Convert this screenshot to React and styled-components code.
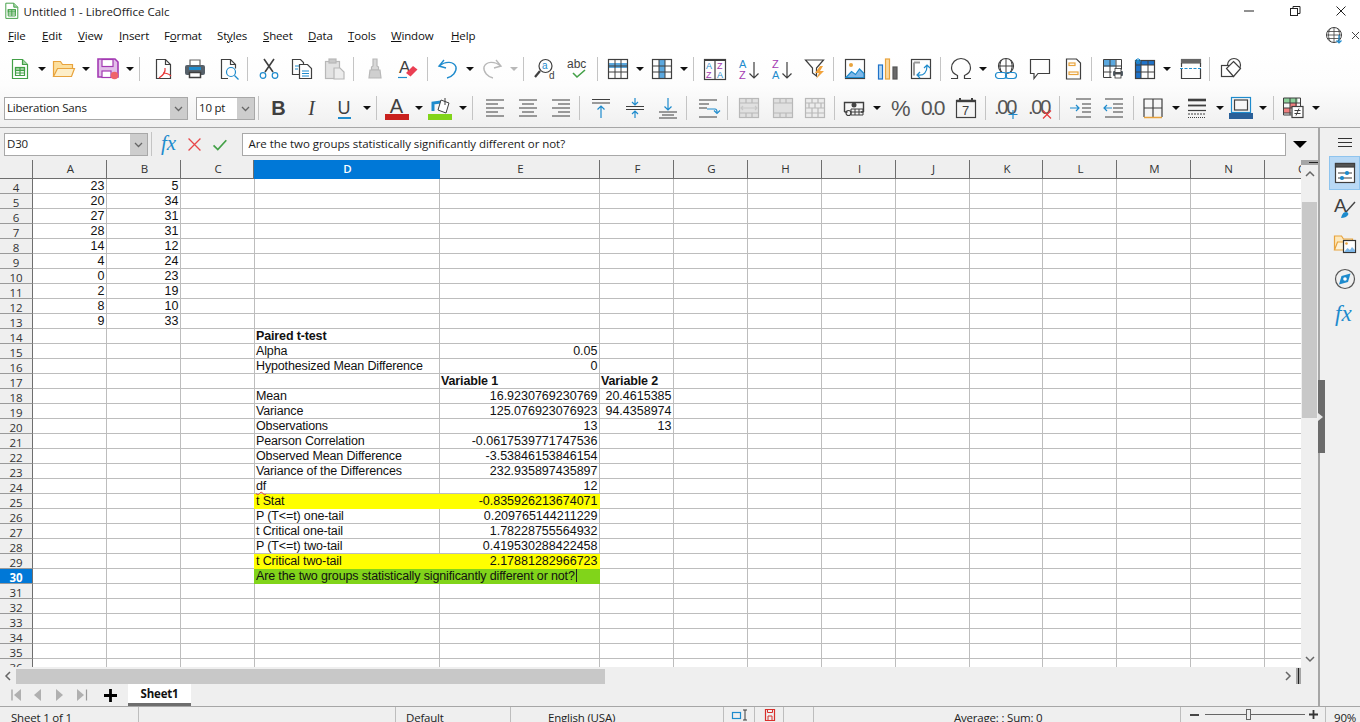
import React from 'react';
import styled, { createGlobalStyle } from 'styled-components';

const ink = '#3f3f3f';
const blue = '#1e8bcd';
const orange = '#e8a33d';
const purple = '#a33ab3';
const green = '#43a047';
const off = '#b8b8b8';
const uiFont = '"Open Sans", "Noto Sans", sans-serif';
const cellFont = '"Liberation Sans", Arial, sans-serif';

const GlobalStyle = createGlobalStyle`
  html, body { margin: 0; padding: 0; background: #fff; }
  body { font-family: ${uiFont}; color: #1a1a1a; }
`;

const Window = styled.div`
  width: 1360px;
  height: 722px;
  display: flex;
  flex-direction: column;
  overflow: hidden;
  background: #fff;
`;

const TitleBar = styled.div`
  height: 22px;
  display: flex;
  align-items: center;
  padding-left: 3px;
  font-size: 11.5px;
  color: #222;
  span { margin-left: 3px; }
`;

const WinButtons = styled.div`
  margin-left: auto;
  margin-right: -4px;
  display: flex;
`;

const WinButton = styled.div`
  width: 46px;
  height: 22px;
  display: flex;
  align-items: center;
  justify-content: center;
`;

const MenuBar = styled.div`
  height: 28px;
  box-sizing: border-box;
  padding: 0 0 2px 8px;
  display: flex;
  align-items: center;
  font-size: 11.5px;
  letter-spacing: -0.15px;
  color: #111;
`;

const MenuItem = styled.div`
  width: ${p => p.$w}px;
  white-space: nowrap;
`;

const MenuEnd = styled.div`
  margin-left: auto;
  display: flex;
  align-items: center;
  gap: 8px;
`;

const Toolbars = styled.div`
  background: linear-gradient(#ffffff 0%, #fdfdfd 45%, #f0f0f0 100%);
  border-bottom: 1px solid #a6a6a6;
`;

const Toolbar = styled.div`
  height: ${p => p.$h}px;
  box-sizing: border-box;
  display: flex;
  align-items: center;
  padding-left: ${p => p.$pad}px;
  padding-top: ${p => p.$top || 0}px;
`;

const Slot = styled.div`
  width: ${p => p.$w}px;
  flex-shrink: 0;
  display: flex;
  justify-content: center;
  align-items: center;
`;

const Drop = styled.div`
  width: 0;
  height: 0;
  border-left: 4px solid transparent;
  border-right: 4px solid transparent;
  border-top: 4px solid ${p => (p.$off ? off : '#111')};
`;

const Sep = styled.div`
  width: 1px;
  height: 24px;
  flex-shrink: 0;
  background: #c4c4c4;
  margin-left: ${p => p.$l}px;
  margin-right: ${p => p.$r}px;
`;

const Glyph = styled.svg`
  display: block;
  flex-shrink: 0;
  fill: none;
  stroke: ${ink};
  stroke-width: 1.2;
`;

const Combo = styled.div`
  width: ${p => p.$w}px;
  height: 23px;
  box-sizing: border-box;
  flex-shrink: 0;
  display: flex;
  background: #fff;
  border: 1.5px solid #a8a8a8;
  margin-left: ${p => p.$ml || 0}px;
  font-size: 11.5px;
  letter-spacing: -0.2px;
`;

const ComboText = styled.div`
  flex: 1;
  padding-left: 2px;
  line-height: 20px;
  white-space: nowrap;
  overflow: hidden;
`;

const ComboButton = styled.div`
  width: 17px;
  background: #cdcdcd;
  display: flex;
  align-items: center;
  justify-content: center;
`;

const TextIcon = styled.div`
  font-family: ${p => (p.$serif ? '"Liberation Serif", serif' : cellFont)};
  font-size: ${p => p.$size}px;
  font-weight: ${p => (p.$bold ? 700 : 400)};
  font-style: ${p => (p.$italic ? 'italic' : 'normal')};
  color: ${ink};
  line-height: 22px;
  height: 22px;
`;

const UnderlineIcon = styled(TextIcon)`
  height: 20px;
  border-bottom: 2px solid ${blue};
`;

const FontColorLetter = styled(TextIcon)`
  line-height: 28px;
`;

const ColorIcon = styled.div`
  width: 24px;
  display: flex;
  flex-direction: column;
  align-items: center;
  padding-bottom: ${p => p.$pb || 0}px;
`;

const ColorBar = styled.div`
  width: 24px;
  height: 6px;
  background: ${p => p.$c};
`;

const Workspace = styled.div`
  flex: 1;
  display: flex;
  min-height: 0;
  position: relative;
`;

const MainCol = styled.div`
  width: 1318px;
  display: flex;
  flex-direction: column;
  background: #efefef;
`;

const FormulaBar = styled.div`
  height: 32px;
  display: flex;
  align-items: center;
  padding-left: 4px;
  box-sizing: border-box;
`;

const FormulaInput = styled.div`
  width: 1044px;
  height: 23px;
  box-sizing: border-box;
  margin-left: 8px;
  border: 1.5px solid #a8a8a8;
  background: #fff;
  padding-left: 5.5px;
  font-size: 11.5px;
  letter-spacing: -0.06px;
  line-height: 19px;
`;

const BigDrop = styled.div`
  margin-left: 7px;
  width: 0;
  height: 0;
  border-left: 7px solid transparent;
  border-right: 7px solid transparent;
  border-top: 7px solid #000;
`;

const GridRow = styled.div`
  height: 508px;
  display: flex;
`;

const Sheet = styled.div`
  width: 1301px;
  height: 507px;
  overflow: hidden;
  background: #fff;
`;

const gridColumns = '33px 74px 74px 73px 186px 160px 74px 74px 74px 74px 74px 73px 74px 74px 74px 74px';

const HeadRow = styled.div`
  height: 19px;
  display: grid;
  grid-template-columns: ${gridColumns};
  background: #efefef;
`;

const ColHead = styled.div`
  box-sizing: border-box;
  background: ${p => (p.$active ? '#0078d7' : '#efefef')};
  color: ${p => (p.$active ? '#fff' : '#333')};
  font-weight: ${p => (p.$active ? 600 : 400)};
  border-right: 1px solid ${p => (p.$active ? '#0078d7' : '#6e6e6e')};
  border-bottom: 1px solid ${p => (p.$active ? '#0078d7' : '#6e6e6e')};
  padding-left: 2px;
  font-size: 11.5px;
  line-height: 18px;
  text-align: center;
`;

const Row = styled.div`
  height: 15px;
  display: grid;
  grid-template-columns: ${gridColumns};
`;

const RowHead = styled.div`
  box-sizing: border-box;
  height: 15px;
  background: ${p => (p.$active ? '#0078d7' : '#efefef')};
  color: ${p => (p.$active ? '#fff' : '#333')};
  font-weight: ${p => (p.$active ? 700 : 400)};
  border-right: 1px solid #6e6e6e;
  border-bottom: 1px solid #9a9a9a;
  font-size: 11.5px;
  line-height: 17px;
  text-align: center;
`;

const Cell = styled.div`
  box-sizing: border-box;
  height: 15px;
  grid-column: span ${p => p.$span || 1};
  background: ${p => p.$fill || '#fff'};
  border-right: ${p => (p.$col === 'C' ? 'none' : `1px solid ${p.$fill || '#bdbdbd'}`)};
  border-left: ${p => (p.$col === 'D' ? `1px solid ${p.$fill || '#bdbdbd'}` : 'none')};
  border-bottom: 1px solid ${p => p.$fill || '#bdbdbd'};
  padding: 0 1.5px 0 ${p => (p.$tight || p.$col === 'D' ? 1 : 2)}px;
  font-family: ${cellFont};
  font-size: 12.5px;
  font-weight: ${p => (p.$bold ? 700 : 400)};
  text-align: ${p => (p.$right ? 'right' : 'left')};
  letter-spacing: ${p => (p.$right ? 0 : '-0.14px')};
  line-height: 15px;
  color: #111;
  white-space: nowrap;
  z-index: ${p => (p.$raised ? 1 : 'auto')};
`;

const Wavy = styled.span`
  text-decoration: underline wavy #e0443e 1px;
  text-underline-offset: 1px;
`;

const Caret = styled.span`
  display: inline-block;
  width: 1px;
  height: 13px;
  margin-left: 1px;
  vertical-align: -2px;
  background: #222;
`;

const VScroll = styled.div`
  width: 17px;
  height: 507px;
  display: flex;
  flex-direction: column;
  align-items: center;
  background: #efefef;
`;

const ScrollSplit = styled.div`
  align-self: stretch;
  height: 5px;
  background: #a5a5a5;
  display: flex;
  justify-content: flex-end;
  align-items: center;
  &::after {
    content: '';
    width: 9px;
    height: 1px;
    background: #222;
  }
`;

const ScrollThumb = styled.div`
  width: 15px;
  height: 216px;
  margin-top: 31px;
  background: #c8c8c8;
`;

const ScrollDown = styled.div`
  margin-top: auto;
  margin-bottom: 5px;
`;

const ScrollUp = styled.div`
  margin-top: 6px;
  height: 0;
`;

const HScroll = styled.div`
  height: 16px;
  display: flex;
  align-items: center;
  background: #efefef;
`;

const HLeft = styled.div`
  width: 16px;
  display: flex;
  justify-content: center;
  background: #efefef;
`;

const HThumb = styled.div`
  width: 589px;
  height: 15px;
  background: #c8c8c8;
`;

const HRight = styled.div`
  margin-left: auto;
  display: flex;
  align-items: center;
  gap: 5px;
  margin-right: 17px;
  &::after {
    content: '';
    width: 5px;
    height: 16px;
    background: linear-gradient(90deg, #a5a5a5 40%, #222 40%, #222 60%, #a5a5a5 60%);
  }
`;

const TabBar = styled.div`
  height: 22px;
  display: flex;
  align-items: center;
  padding-left: 11px;
`;

const TabNav = styled.div`
  width: 22px;
  display: flex;
  align-items: center;
`;

const AddTab = styled.div`
  width: 24px;
  margin-left: 1px;
  padding-left: 4px;
`;

const TabActive = styled.div`
  width: 63px;
  height: 22px;
  box-sizing: border-box;
  background: #fff;
  border-bottom: 3px solid #6e6e6e;
  font-size: 11.5px;
  font-weight: 700;
  letter-spacing: -0.2px;
  text-align: center;
  line-height: 20px;
  color: #111;
`;

const SideDeck = styled.div`
  width: 42px;
  box-sizing: border-box;
  border-left: 2px solid #a6a6a6;
  background: #f0f0f0;
  display: flex;
  flex-direction: column;
`;

const SideSlot = styled.div`
  height: ${p => p.$h}px;
  margin-left: 9px;
  display: flex;
  align-items: center;
  justify-content: center;
  box-sizing: border-box;
  background: ${p => (p.$active ? '#b9d9f5' : 'transparent')};
  border: 1px solid ${p => (p.$active ? '#8fc4ee' : 'transparent')};
`;

const SideHandle = styled.div`
  position: absolute;
  left: 1318px;
  top: 252px;
  width: 7px;
  height: 73px;
  background: #6b6b6b;
  display: flex;
  align-items: center;
  &::after {
    content: '';
    border-left: 5px solid #e8e8e8;
    border-top: 4px solid transparent;
    border-bottom: 4px solid transparent;
  }
`;

const StatusBar = styled.div`
  height: 16px;
  box-sizing: border-box;
  border-top: 1px solid #a6a6a6;
  background: #efefef;
  display: flex;
  overflow: hidden;
  font-size: 11.5px;
  letter-spacing: -0.2px;
  color: #222;
`;

const StatusCell = styled.div`
  width: ${p => p.$w}px;
  flex-shrink: 0;
  box-sizing: border-box;
  border-right: 1px solid ${p => (p.$plain ? 'transparent' : '#bdbdbd')};
  padding-left: ${p => p.$pad || 0}px;
  display: flex;
  align-items: ${p => (p.$icon ? 'center' : 'flex-start')};
  line-height: 21px;
  white-space: nowrap;
`;

const ZoomTrack = styled.div`
  width: 100px;
  height: 1px;
  background: #666;
  margin: 0 4px 0 6px;
  position: relative;
  &::after {
    content: '';
    position: absolute;
    left: 41px;
    top: -5px;
    width: 3px;
    height: 9px;
    background: #efefef;
    border: 1px solid #666;
  }
`;

// small text label inside an icon
const T = ({ x, y, s, c = ink, f, sp, children }) => (
  <text x={x} y={y} fontSize={s} fill={c} stroke="none" letterSpacing={sp} fontStyle={f === 'serif' ? 'italic' : undefined}
    fontFamily={f === 'serif' ? '"Liberation Serif", serif' : '"Liberation Sans", sans-serif'}>{children}</text>
);

const gridLines = 'M8 1.5v19M14 1.5v19M1.5 8h19M1.5 14h19';
const G = ({ stroke = ink, children }) => <g stroke={stroke}>{children}</g>;

const icons = {
  new: <G stroke={green}>
    <path d="M3.5 1.5h10l5 5v14h-15z" fill="#fff" />
    <path d="M13.5 1.5v5h5" fill="#a5d6a7" />
    <rect x="6.5" y="9.500" width="9" height="3" fill="#a5d6a7" />
    <path d="M6.5 9.500v8h9v-8M6.500 15h9M11 9.500v8" />
  </G>,
  open: <G stroke={orange}>
    <path d="M.5 18.5v-15h7l2 3h10v4" fill="#fcdf9e" />
    <path d="M.5 18.5l4-8h17l-3 8z" fill="#fdeec8" />
  </G>,
  save: <G stroke={purple}>
    <path d="M1 1h17l3 3v15H1z" fill="#e2bfe9" strokeWidth="1.6" />
    <rect x="5" y="1.5" width="11" height="7" fill="#fff" />
    <rect x="5" y="13" width="9" height="6.5" fill="#fff" />
    <circle cx="17.5" cy="17.5" r="3.8" fill="#ef636b" stroke="none" />
  </G>,
  pdf: <>
    <path d="M4.5 1.5h9l5 5v14h-14z" />
    <path d="M13.5 1.5v5h5" />
    <path d="M13 10c1 5-3 8-6 10M11 15c3 0 6 1 8 3" stroke="#e83a3a" />
  </>,
  print: <>
    <path d="M6 7V2h10v5" stroke="#666" />
    <rect x="1" y="7" width="20" height="10" rx="2" fill="#566069" stroke="none" />
    <rect x="5" y="9" width="12" height="3" fill={blue} stroke="none" />
    <rect x="5.5" y="14.5" width="11" height="5" fill="#fff" strokeWidth="1.5" />
  </>,
  preview: <>
    <path d="M10 20.5H3.5v-19h9l5 5v4" />
    <path d="M12.5 1.5v5h5" />
    <circle cx="13" cy="14" r="4.5" stroke={blue} />
    <path d="M16.5 17.5l4 4" stroke={blue} />
  </>,
  cut: <>
    <path d="M6 1l9 13M16 1L7 14" strokeWidth="1.6" />
    <circle cx="5" cy="17.5" r="2.8" stroke={blue} />
    <circle cx="17" cy="17.5" r="2.8" stroke={blue} />
  </>,
  copy: <>
    <path d="M1.5 1.5h8l3 3v12h-11z" />
    <path d="M8.5 6.5h8l4 4v10h-12z" fill="#fff" />
    <path d="M4 8h4M4 11h3M11 13h7M11 15.5h7M11 18h7" stroke={blue} />
  </>,
  paste: <G stroke={off}>
    <rect x="1.5" y="3.5" width="14" height="17" fill="#e2e2e2" />
    <rect x="5" y="1" width="7" height="4" fill="#c8c8c8" />
    <path d="M10 10h6l4 4v7H10z" fill="#ececec" />
  </G>,
  clone: <G stroke={off}>
    <path d="M9 1h4v7l1.5 1v3h-7V9L9 8z" fill="#d8d8d8" />
    <path d="M6 12h10l1 8H5z" fill="#cfcfcf" />
  </G>,
  clear: <>
    <T x={2} y={15} s={17}>A</T>
    <path d="M1 19.5h9" stroke={blue} />
    <path d="M9 15l7-7 4.5 3.5-7 7z" fill="#ea3f53" stroke="none" />
  </>,
  undo: <path d="M7 2L2 8l7 2M2.5 8C8 3 17 3 19 9c1 5-4 10-9 11" stroke={blue} strokeWidth="1.4" />,
  redo: <path d="M15 2l5 6-7 2M19.5 8C14 3 5 3 3 9c-1 5 4 10 9 11" stroke={off} strokeWidth="1.4" />,
  find: <>
    <circle cx="11.5" cy="8" r="6.5" />
    <path d="M6 13l-5 6" strokeWidth="2.2" />
    <T x={8} y={11} s={10} c={blue}>a</T>
    <T x={15} y={21} s={10}>d</T>
  </>,
  spell: <>
    <T x={0} y={10} s={12}>abc</T>
    <path d="M6 15l4 4 8-7" stroke={green} strokeWidth="1.6" />
  </>,
  row: <>
    <rect x="1.5" y="5" width="19" height="5" fill="#5ba8df" stroke="none" />
    <rect x="1.5" y="1.5" width="19" height="19" />
    <path d={gridLines} strokeWidth="1" />
  </>,
  col: <>
    <rect x="8" y="1.5" width="6" height="19" fill="#5ba8df" stroke="none" />
    <rect x="1.5" y="1.5" width="19" height="19" />
    <path d={gridLines} strokeWidth="1" />
  </>,
  autofilter: <>
    <rect x=".5" y="1.5" width="21" height="20" />
    <path d="M.5 2.5h21M11 3v18" />
    <T x={2} y={11} s={9} c={blue}>A</T><T x={2} y={20} s={9} c={purple}>Z</T>
    <T x={13} y={11} s={9} c={purple}>Z</T><T x={13} y={20} s={9} c={blue}>A</T>
  </>,
  asc: <>
    <T x={1} y={10} s={11} c={blue}>A</T><T x={1} y={21} s={11} c={purple}>Z</T>
    <path d="M16 4v16M11.5 15.5L16 20l4.5-4.5" />
  </>,
  desc: <>
    <T x={1} y={10} s={11} c={purple}>Z</T><T x={1} y={21} s={11} c={blue}>A</T>
    <path d="M16 4v16M11.5 15.5L16 20l4.5-4.5" />
  </>,
  filter: <>
    <path d="M1.5 2h18l-7 8v8l-4-3v-5z" />
    <path d="M16 8l-5 7h4l-3 6 8-8h-4l3-5z" fill="#f2a33c" stroke="none" />
  </>,
  image: <>
    <rect x="1.5" y="1.5" width="19" height="19" />
    <circle cx="7" cy="7" r="2" fill={orange} stroke="none" />
    <path d="M2 19.5l5.5-6 4 3 4-5.5 4.5 4.5v4z" fill="#7db7e8" stroke={blue} />
  </>,
  chart: <>
    <rect x="1.5" y="7" width="4" height="14" fill="#b4d7f3" stroke="#1e72c9" />
    <rect x="8.5" y="1" width="4" height="20" fill="#fbd9a0" stroke={orange} />
    <rect x="16" y="9" width="4" height="12" fill="#6a6a6a" stroke="#555" />
  </>,
  pivot: <>
    <rect x="1.5" y="1.5" width="19" height="19" />
    <path d="M4 4.5h6M4 4.5v13" stroke="#999" strokeWidth="2" />
    <path d="M8 17c6 1 9-3 9-9M14 10l3-3 3 3M10 14l-3 3 3 3" stroke={blue} />
  </>,
  omega: <path d="M1 20.5h6.5v-3C4 16 1.5 13 1.5 10a9.5 9.5 0 0 1 19 0c0 3-2.5 6-6 7.5v3H21" />,
  link: <>
    <circle cx="11" cy="8" r="7.5" />
    <path d="M3.5 8h15M11 .5v15M6.5 2c-2 4-2 8 0 12M15.5 2c2 4 2 8 0 12" strokeWidth="1" />
    <rect x=".5" y="14.5" width="11" height="6" rx="3" fill="#fff" stroke={blue} />
    <rect x="10.5" y="14.5" width="11" height="6" rx="3" fill="none" stroke={blue} />
  </>,
  comment: <path d="M1.5 1.5h19v14H9l-4 5v-5H1.5z" />,
  header: <>
    <path d="M4.5 1h10l4 4v16h-14z" />
    <rect x="7" y="5" width="6" height="2.5" stroke={orange} />
    <rect x="7" y="14" width="9" height="2.5" stroke={orange} />
  </>,
  printarea: <>
    <rect x="1.5" y="1.5" width="12" height="7" fill="#5ba8df" stroke="none" />
    <path d="M1.5 1.5h18v10M1.5 1.5v18h8M8 1.5v18M14 1.5v9M1.5 8h18M1.5 14h8" strokeWidth="1" />
    <rect x="11" y="13" width="10" height="5" rx="1" fill="#566069" stroke="none" />
    <rect x="13" y="10.5" width="6" height="4" fill="#fff" stroke="#333" strokeWidth=".8" />
    <rect x="13" y="16" width="6" height="4" fill="#fff" stroke="#333" strokeWidth=".8" />
  </>,
  freeze: <>
    <rect x="1.5" y="2.5" width="19" height="4.5" fill="#1e72c9" stroke="none" />
    <rect x="1.5" y="2.5" width="5.5" height="18" fill="#1e72c9" stroke="none" />
    <rect x="1.5" y="2.5" width="19" height="18" />
    <path d="M7 2.5v18M14 2.5v18M1.5 7h19M1.5 14h19" strokeWidth="1" />
    <path d="M4 0v6M1 3h6M2 1l4 4M6 1L2 5" stroke={blue} strokeWidth="1" />
  </>,
  split: <>
    <path d="M1.5 11v9.5h19V11" />
    <rect x="1.5" y="1.5" width="19" height="3.5" fill="#666" stroke="#666" />
    <path d="M1.5 5v4M20.5 5v4" />
    <path d="M0 10.5h22" stroke={blue} strokeDasharray="3 1.5" />
  </>,
  shapes: <>
    <circle cx="14" cy="7" r="6.5" />
    <rect x="1.5" y="7.5" width="12" height="11" fill="#fff" />
    <path d="M13.5 3.5l7 7-7 8-7-8z" fill="#fff" />
  </>,
  alignL: <path d="M2 3h18M2 7h12M2 11h18M2 15h12M2 19h18" />,
  alignC: <path d="M2 3h18M5 7h12M2 11h18M5 15h12M2 19h18" />,
  alignR: <path d="M2 3h18M8 7h12M2 11h18M8 15h12M2 19h18" />,
  top: <>
    <path d="M2 2.5h18M2 6h18" />
    <path d="M11 21V9M7.5 12.5L11 9l3.5 3.5" stroke={blue} />
  </>,
  middle: <>
    <path d="M2 9.500h18M2 12.500h18" />
    <path d="M11 1v7M8 5l3 3 3-3M11 21v-7M8 17l3-3 3 3" stroke={blue} />
  </>,
  bottom: <>
    <path d="M2 15h18M5 18h12M2 21h18" />
    <path d="M11 1v12M7.500 9.500L11 13l3.500-3.500" stroke={blue} />
  </>,
  wrap: <>
    <path d="M2 3h18M2 7h10M2 11h8M2 20h18" />
    <path d="M10 12h8c2 0 2 1 2 3M17 13.500l3 3 3-3" stroke={blue} />
  </>,
  merge: <G stroke={off}>
    <rect x="1.500" y="1.500" width="19" height="19" fill="#e0e0e0" />
    <path d="M1.500 6h19M1.500 16h19M8 1.500V6M14 1.500V6M8 16v4.500M14 16v4.500" />
    <path d="M3 11h16M5 9l-2 2 2 2M17 9l2 2-2 2" stroke="#c8c8c8" />
  </G>,
  mergeAll: <G stroke={off}>
    <rect x="1.500" y="1.500" width="19" height="19" fill="#e0e0e0" />
    <path d="M1.500 6h19M1.500 16h19M8 1.500V6M14 1.500V6M8 16v4.500M14 16v4.500" />
  </G>,
  split2: <G stroke={off}>
    <rect x="1.500" y="1.500" width="19" height="19" fill="#ececec" />
    <path d="M1.500 6h19M1.500 11h19M1.500 16h19M8 1.500V6M14 1.500V6M5 6v5M11 6v5M17 6v5M8 11v5M14 11v5M8 16v4.500M14 16v4.500" />
  </G>,
  currency: <>
    <path d="M1.500 15V5.500h19V15M1.500 15h3M18 15h2.500" strokeWidth="1.400" />
    <circle cx="11" cy="8" r="2.500" fill="#444" stroke="none" />
    <path d="M8 12h12v6H8zM8 15h12M12 12v6M16 12v6" strokeWidth="1" />
    <circle cx="5.500" cy="16" r="2.500" />
  </>,
  percent: <T x={2} y={19} s={22} c="#555">%</T>,
  decimal: <T x={-1} y={18} s={21} c="#555" sp={-2.4}>0.0</T>,
  date: <>
    <rect x="1.500" y="3.500" width="19" height="17" />
    <path d="M1.500 4h19" strokeWidth="2.400" />
    <path d="M5 1v3M17 1v3" strokeWidth="2" />
    <T x={7} y={18} s={13}>7</T>
  </>,
  addDec: <>
    <T x={-1} y={17} s={20} c="#555" sp={-2.2}>.00</T>
    <path d="M18 13v9M13.500 17.500h9" stroke={blue} />
  </>,
  delDec: <>
    <T x={-1} y={17} s={20} c="#555" sp={-2.2}>.00</T>
    <path d="M14 13.500l8 8M22 13.500l-8 8" stroke="#e83a3a" />
  </>,
  indent: <>
    <path d="M6 2h15M12 7h9M12 11h9M12 15h9M6 20h15" />
    <path d="M0 11h9M6 8l3 3-3 3" stroke={blue} />
  </>,
  outdent: <>
    <path d="M2 2h18M10 7h10M10 11h10M10 15h10M2 20h18" />
    <path d="M9 11H1M4 8l-3 3 3 3" stroke={blue} />
  </>,
  border: <>
    <path d="M2 20V2h18v18M11 2v18M2 11h18" />
    <path d="M2 20.500h18" stroke={orange} strokeWidth="1.500" />
  </>,
  line: <>
    <path d="M2 3h18" strokeWidth="2.600" />
    <path d="M2 8.500h18" strokeWidth="1.800" />
    <path d="M2 13.500h18" strokeWidth="1.200" />
    <path d="M2 17h18" strokeDasharray="2 1" />
    <path d="M2 20.500h18" strokeDasharray="1 1" />
  </>,
  borderColor: <>
    <rect x=".5" y=".5" width="19" height="15" stroke={blue} />
    <rect x="3.500" y="3" width="13" height="10" />
  </>,
  bucket: <g transform="translate(1 5)">
    <path d="M3 14V6l8-1" stroke={blue} strokeWidth="3" />
    <path d="M11 3l8 3-3 10-8-3z" fill="#fff" strokeWidth="1" />
    <path d="M15 1v7" strokeWidth="1" />
  </g>,
  cond: <>
    <rect x="1.500" y="1" width="14" height="5" fill="#8bd09a" stroke="none" />
    <rect x="8" y="6" width="7" height="5" fill="#f07f7f" stroke="none" />
    <rect x="1.500" y="11" width="7" height="5" fill="#f07f7f" stroke="none" />
    <path d="M1.500 1h17v8M1.500 1v17h8M8 1v17M14 1v8M1.500 6h17M1.500 11h9M1.500 16h8" strokeWidth="1" />
    <rect x="10" y="9.500" width="11" height="11" fill="#fff" />
    <path d="M12.500 13.500h6M12.500 16.500h6M17 11.500l-3 7" strokeWidth="1" />
  </>,
  fx: <T x={2} y={17} s={21} c={blue} f="serif">fx</T>,
  cancel: <path d="M3 3l14 14M17 3L3 17" stroke="#e8474a" strokeWidth="1.500" />,
  accept: <path d="M3 11l5 5L18 5" stroke={green} strokeWidth="2" />,
  chevron: <path d="M2 2l3.500 3.500L9 2" stroke="#666" strokeWidth="1.300" />,
  minimize: <path d="M0 5h10" stroke="#222" strokeWidth="1" />,
  restore: <><path d="M3 2.500V.5h7v7H8" stroke="#222" strokeWidth="1" /><rect x=".5" y="2.500" width="7" height="7" stroke="#222" strokeWidth="1" /></>,
  close: <path d="M.5.500l9 9M9.500.500l-9 9" stroke="#222" strokeWidth="1" />,
  globe: <>
    <circle cx="9" cy="9" r="7.500" strokeWidth="1" />
    <path d="M1.500 9h15M9 1.500v15M5 3c-2 4-2 8 0 12M13 3c2 4 2 8 0 12M2.500 5.500h13M2.500 12.500h13" strokeWidth=".8" />
    <path d="M14 9v8M11.500 14.500l2.500 2.500 2.500-2.500" stroke={blue} />
  </>,
  closeDoc: <path d="M1 1l7 7M8 1L1 8" stroke="#444" strokeWidth="1" />,
  hamburger: <path d="M1 1.500h14M1 5.500h14M1 9.500h14" stroke="#333" strokeWidth="1.100" />,
  props: <>
    <rect x="1.500" y="1.500" width="19" height="19" fill="#fff" />
    <rect x="1.500" y="1.500" width="19" height="3.500" fill="#555" />
    <path d="M4 11h14M4 16h14" />
    <circle cx="13" cy="11" r="1.500" fill={blue} stroke={blue} />
    <circle cx="8" cy="16" r="1.500" fill={blue} stroke={blue} />
  </>,
  styles: <>
    <T x={0} y={15} s={19}>A</T>
    <path d="M21 5L12 15" stroke="#444" strokeWidth="1.400" />
    <path d="M7 21c1-3 2-6 5-6 2 0 3 2 2 3-1 2-4 3-7 3z" fill={blue} stroke="none" />
  </>,
  gallery: <>
    <path d="M.5 17V3h7l2 3h9v2" stroke={orange} fill="#fde8bb" />
    <path d="M.5 17l3-8h8v8z" stroke={orange} fill="#fdf2d9" />
    <rect x="9.500" y="7.500" width="12" height="12" fill="#fff" stroke="#333" />
    <circle cx="12.500" cy="10.500" r="1.300" fill={orange} stroke="none" />
    <path d="M10 19l3.500-4 2.500 2 2-3 3 3v2z" fill="#7db7e8" stroke="none" />
  </>,
  navigator: <>
    <circle cx="11" cy="11" r="9.500" stroke="#555" />
    <path d="M16.500 5.500l-9 2.500-2.500 8.500 9-2.500z" fill={blue} stroke="none" />
    <circle cx="11" cy="11" r="1.800" fill="#fff" stroke="none" />
  </>,
  sidefx: <T x={1} y={18} s={23} c={blue} f="serif">fx</T>,
  triUp: <path d="M1 5l4-4 4 4" stroke="#666" strokeWidth="1.500" />,
  triDown: <path d="M1 1l4 4 4-4" stroke="#666" strokeWidth="1.500" />,
  triLeft: <path d="M5 1L1 5l4 4" stroke="#666" strokeWidth="1.500" />,
  triRight: <path d="M1 1l4 4-4 4" stroke="#666" strokeWidth="1.500" />,
  first: <><path d="M1 .5v11" stroke="#9a9a9a" strokeWidth="1.200" /><path d="M10 0v12L3 6z" fill="#b0b0b0" stroke="none" /></>,
  prev: <path d="M8 0v12L1 6z" fill="#b0b0b0" stroke="none" />,
  next: <path d="M1 0v12l7-6z" fill="#b0b0b0" stroke="none" />,
  last: <><path d="M9.500 .5v11" stroke="#9a9a9a" strokeWidth="1.200" /><path d="M0 0v12l7-6z" fill="#b0b0b0" stroke="none" /></>,
  plus: <path d="M6.500 0v13M0 6.500h13" stroke="#000" strokeWidth="2.800" />,
  insertMode: <><rect x=".5" y="3.500" width="8" height="6" stroke={blue} strokeWidth="1.200" /><path d="M11 1h4M13 1v10M11 11h4" strokeWidth="1" /></>,
  docSaved: <><path d="M.5.500h9v11h-9z" stroke="#d8302c" strokeWidth="1.200" /><path d="M2.500 .5v3h5v-3M3 7h4v4.500H3z" stroke="#d8302c" strokeWidth="1" /></>,
  minus: <path d="M0 1h9" stroke="#333" strokeWidth="1.800" />,
  zoomPlus: <path d="M4.500 0v9M0 4.500h9" stroke="#333" strokeWidth="1.800" />,
};

const Icon = ({ name, w = 22, h = 22, scale = 1 }) => (
  <Glyph width={w * scale} height={h * scale} viewBox={`0 0 ${w} ${h}`} overflow="visible">{icons[name]}</Glyph>
);

const Tool = ({ item }) => {
  const [name, a, b] = item;
  if (name === 'sep') return <Sep $l={a} $r={b} />;
  if (name === 'drop') return <Slot $w={a}><Drop /></Slot>;
  if (name === 'dropOff') return <Slot $w={a}><Drop $off /></Slot>;
  return <Slot $w={a}><Icon name={name} /></Slot>;
};

const standardBar = [
  ['new', 33], ['drop', 11], ['open', 33], ['drop', 11], ['save', 33], ['drop', 11], ['sep', 4, 6],
  ['pdf', 33], ['print', 32], ['preview', 35], ['sep', 1, 4],
  ['cut', 33], ['copy', 33], ['paste', 33], ['sep', 2, 4],
  ['clone', 33], ['clear', 33], ['sep', 3, 3],
  ['undo', 33], ['drop', 11], ['redo', 33], ['dropOff', 11], ['sep', 4, 3],
  ['find', 36], ['spell', 30], ['sep', 4, 3],
  ['row', 33], ['drop', 11], ['col', 33], ['drop', 11], ['sep', 4, 3],
  ['autofilter', 35], ['asc', 33], ['desc', 34], ['filter', 32], ['sep', 2, 4],
  ['image', 33], ['chart', 33], ['pivot', 33], ['sep', 3, 3],
  ['omega', 33], ['drop', 11], ['link', 35], ['comment', 33], ['header', 33], ['sep', 2, 4],
  ['printarea', 33], ['freeze', 31], ['drop', 14], ['split', 33], ['sep', 2, 4],
  ['shapes', 34],
];

const alignBar = [
  ['alignL', 33], ['alignC', 33], ['alignR', 33], ['sep', 2, 3],
  ['top', 35], ['middle', 33], ['bottom', 33], ['sep', 2, 3],
  ['wrap', 35], ['sep', 2, 3],
  ['merge', 36], ['mergeAll', 31], ['split2', 34], ['sep', 2, 3],
  ['currency', 32], ['drop', 14], ['percent', 32], ['decimal', 33], ['date', 34], ['sep', 2, 3],
  ['addDec', 33], ['delDec', 35], ['sep', 2, 3],
  ['indent', 36], ['outdent', 30], ['sep', 4, 3],
  ['border', 31], ['drop', 16], ['line', 26], ['drop', 19],
];

const menus = [
  ['File', 'F', 34], ['Edit', 'E', 36], ['View', 'V', 41], ['Insert', 'I', 45], ['Format', 'o', 53],
  ['Styles', 'y', 46], ['Sheet', 'S', 45], ['Data', 'D', 40], ['Tools', 'T', 43], ['Window', 'W', 60], ['Help', 'H', 40],
];

const Mnemonic = ({ label, letter }) => {
  const at = label.indexOf(letter);
  return <>{label.slice(0, at)}<u>{letter}</u>{label.slice(at + 1)}</>;
};

const columns = ['A', 'B', 'C', 'D', 'E', 'F', 'G', 'H', 'I', 'J', 'K', 'L', 'M', 'N', 'O'];

const yellow = '#ffff00';
const lime = '#81d41a';

const sheetData = {
  4: { A: 23, B: 5 }, 5: { A: 20, B: 34 }, 6: { A: 27, B: 31 }, 7: { A: 28, B: 31 }, 8: { A: 14, B: 12 },
  9: { A: 4, B: 24 }, 10: { A: 0, B: 23 }, 11: { A: 2, B: 19 }, 12: { A: 8, B: 10 }, 13: { A: 9, B: 33 },
  14: { D: 'Paired t-test', bold: true },
  15: { D: 'Alpha', E: 0.05 },
  16: { D: 'Hypothesized Mean Difference', E: 0 },
  17: { E: 'Variable 1', F: 'Variable 2', bold: true },
  18: { D: 'Mean', E: 16.9230769230769, F: 20.4615385 },
  19: { D: 'Variance', E: 125.076923076923, F: 94.4358974 },
  20: { D: 'Observations', E: 13, F: 13 },
  21: { D: 'Pearson Correlation', E: -0.0617539771747536 },
  22: { D: 'Observed Mean Difference', E: -3.53846153846154 },
  23: { D: 'Variance of the Differences', E: 232.935897435897 },
  24: { D: 'df', E: 12 },
  25: { D: 't Stat', E: -0.835926213674071, fill: yellow },
  26: { D: 'P (T<=t) one-tail', E: 0.209765144211229 },
  27: { D: 't Critical one-tail', E: 1.78228755564932 },
  28: { D: 'P (T<=t) two-tail', E: 0.419530288422458 },
  29: { D: 't Critical two-tail', E: 2.17881282966723, fill: yellow },
};

const rowNumbers = Array.from({ length: 33 }, (_, i) => i + 4);

const SheetRow = ({ n }) => {
  const data = sheetData[n] || {};
  if (n === 30) {
    return (
      <Row>
        <RowHead $active>30</RowHead>
        {['A', 'B', 'C'].map(c => <Cell key={c} $col={c} />)}
        <Cell $col="D" $span={2} $fill={lime}>Are the two groups statistically significantly different or not?<Caret /></Cell>
        {columns.slice(5).map(c => <Cell key={c} $col={c} />)}
      </Row>
    );
  }
  return (
    <Row>
      <RowHead>{n}</RowHead>
      {columns.map(c => {
        const value = data[c];
        const filled = data.fill && (c === 'D' || c === 'E');
        const misspelt = n === 24 && c === 'D';
        return (
          <Cell key={c} $col={c} $right={typeof value === 'number'} $bold={data.bold} $tight={n === 17}
            $raised={misspelt} $fill={filled ? data.fill : undefined}>
            {misspelt ? <Wavy>df</Wavy> : value}
          </Cell>
        );
      })}
    </Row>
  );
};

export default function App() {
  return (
    <>
      <GlobalStyle />
      <Window>
        <TitleBar>
          <Icon name="new" scale={0.8} />
          <span>Untitled 1 - LibreOffice Calc</span>
          <WinButtons>
            <WinButton><Icon name="minimize" w={10} h={10} /></WinButton>
            <WinButton><Icon name="restore" w={10} h={10} /></WinButton>
            <WinButton><Icon name="close" w={10} h={10} /></WinButton>
          </WinButtons>
        </TitleBar>

        <MenuBar>
          {menus.map(([label, letter, w]) => (
            <MenuItem key={label} $w={w}><Mnemonic label={label} letter={letter} /></MenuItem>
          ))}
          <MenuEnd>
            <Icon name="globe" w={18} h={18} />
            <Icon name="closeDoc" w={9} h={9} />
          </MenuEnd>
        </MenuBar>

        <Toolbars>
          <Toolbar $h={38} $pad={3}>
            {standardBar.map((item, i) => <Tool key={i} item={item} />)}
          </Toolbar>
          <Toolbar $h={39} $pad={4} $top={1}>
            <Combo $w={184}>
              <ComboText>Liberation Sans</ComboText>
              <ComboButton><Icon name="chevron" w={11} h={7} /></ComboButton>
            </Combo>
            <Combo $w={59} $ml={8}>
              <ComboText>10 pt</ComboText>
              <ComboButton><Icon name="chevron" w={11} h={7} /></ComboButton>
            </Combo>
            <Sep $l={3} $r={3} />
            <Slot $w={33}><TextIcon $size={20} $bold>B</TextIcon></Slot>
            <Slot $w={33}><TextIcon $size={20} $serif $italic>I</TextIcon></Slot>
            <Slot $w={32}><UnderlineIcon $size={18}>U</UnderlineIcon></Slot>
            <Slot $w={14}><Drop /></Slot>
            <Sep $l={2} $r={3} />
            <Slot $w={33}>
              <ColorIcon $pb={4}><FontColorLetter $size={20}>A</FontColorLetter><ColorBar $c="#c9211e" /></ColorIcon>
            </Slot>
            <Slot $w={12}><Drop /></Slot>
            <Slot $w={30}>
              <ColorIcon $pb={4}>
                <Icon name="bucket" w={22} h={22} />
                <ColorBar $c={lime} />
              </ColorIcon>
            </Slot>
            <Slot $w={16}><Drop /></Slot>
            <Sep $l={1} $r={5} />
            {alignBar.map((item, i) => <Tool key={i} item={item} />)}
            <Slot $w={24}>
              <ColorIcon>
                <Icon name="borderColor" w={20} h={16} />
                <ColorBar $c="#2a6099" />
              </ColorIcon>
            </Slot>
            <Slot $w={20}><Drop /></Slot>
            <Sep $l={0} $r={3} />
            <Slot $w={32}><Icon name="cond" /></Slot>
            <Slot $w={14}><Drop /></Slot>
          </Toolbar>
        </Toolbars>

        <Workspace>
          <MainCol>
            <FormulaBar>
              <Combo $w={144}>
                <ComboText>D30</ComboText>
                <ComboButton><Icon name="chevron" w={11} h={7} /></ComboButton>
              </Combo>
              <Sep $l={3} $r={3} />
              <Slot $w={29}><Icon name="fx" /></Slot>
              <Slot $w={20}><Icon name="cancel" w={20} h={20} scale={0.85} /></Slot>
              <Slot $w={30}><Icon name="accept" w={20} h={20} scale={0.85} /></Slot>
              <FormulaInput>Are the two groups statistically significantly different or not?</FormulaInput>
              <BigDrop />
            </FormulaBar>

            <GridRow>
              <Sheet>
                <HeadRow>
                  <ColHead />
                  {columns.map(c => <ColHead key={c} $active={c === 'D'}>{c}</ColHead>)}
                </HeadRow>
                {rowNumbers.map(n => <SheetRow key={n} n={n} />)}
              </Sheet>
              <VScroll>
                <ScrollSplit />
                <ScrollUp><Icon name="triUp" w={10} h={6} /></ScrollUp>
                <ScrollThumb />
                <ScrollDown><Icon name="triDown" w={10} h={6} /></ScrollDown>
              </VScroll>
            </GridRow>

            <HScroll>
              <HLeft><Icon name="triLeft" w={6} h={10} /></HLeft>
              <HThumb />
              <HRight><Icon name="triRight" w={6} h={10} /></HRight>
            </HScroll>

            <TabBar>
              <TabNav><Icon name="first" w={11} h={12} /></TabNav>
              <TabNav><Icon name="prev" w={9} h={12} /></TabNav>
              <TabNav><Icon name="next" w={9} h={12} /></TabNav>
              <TabNav><Icon name="last" w={11} h={12} /></TabNav>
              <AddTab><Icon name="plus" w={13} h={13} /></AddTab>
              <TabActive>Sheet1</TabActive>
            </TabBar>
          </MainCol>

          <SideDeck>
            <SideSlot $h={28}><Icon name="hamburger" w={16} h={11} /></SideSlot>
            <SideSlot $h={34} $active><Icon name="props" /></SideSlot>
            <SideSlot $h={36}><Icon name="styles" /></SideSlot>
            <SideSlot $h={35}><Icon name="gallery" /></SideSlot>
            <SideSlot $h={35}><Icon name="navigator" /></SideSlot>
            <SideSlot $h={35}><Icon name="sidefx" /></SideSlot>
          </SideDeck>
          <SideHandle />
        </Workspace>

        <StatusBar>
          <StatusCell $w={139} $pad={11}>Sheet 1 of 1</StatusCell>
          <StatusCell $w={257} />
          <StatusCell $w={115} $pad={10}>Default</StatusCell>
          <StatusCell $w={213} $pad={37}>English (USA)</StatusCell>
          <StatusCell $w={31} $pad={8} $icon><Icon name="insertMode" w={16} h={12} /></StatusCell>
          <StatusCell $w={29} $pad={10} $icon><Icon name="docSaved" w={10} h={12} /></StatusCell>
          <StatusCell $w={30} />
          <StatusCell $w={367} $pad={140}>Average: ; Sum: 0</StatusCell>
          <StatusCell $w={145} $pad={9} $icon>
            <Icon name="minus" w={9} h={2} />
            <ZoomTrack />
            <Icon name="zoomPlus" w={9} h={9} />
          </StatusCell>
          <StatusCell $w={34} $pad={8} $plain>90%</StatusCell>
        </StatusBar>
      </Window>
    </>
  );
}
